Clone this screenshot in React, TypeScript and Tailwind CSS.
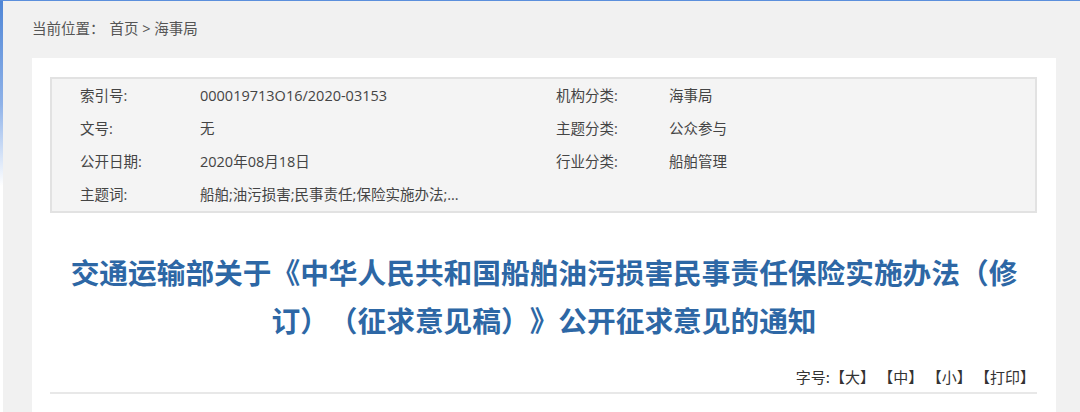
import React from "react";

const cjk = { fontFamily: '"Noto Sans CJK SC", "Noto Sans", sans-serif' };
const mixed = { fontFamily: '"Open Sans", "Noto Sans CJK SC", sans-serif' };

function Row({ l1, v1, l2, v2 }: { l1: string; v1: string; l2?: string; v2?: string }) {
  return (
    <div className="flex h-[33px] items-center text-[14.5px] text-[#444]" style={mixed}>
      <div className="flex w-[504px] pl-[28px]">
        <div className="w-[120px]">{l1}</div>
        <div>{v1}</div>
      </div>
      {l2 && (
        <div className="flex">
          <div className="w-[113px]">{l2}</div>
          <div>{v2}</div>
        </div>
      )}
    </div>
  );
}

export default function App() {
  return (
    <div
      className="flex h-[412px] w-[1080px] overflow-hidden border-t border-[#5b8fdc] bg-[#f1f1f1] [text-spacing-trim:space-all]"
      style={cjk}
    >
      <div className="h-full w-[3px] shrink-0 bg-gradient-to-b from-[#4f86d6] via-[#8fb2e8] via-25% to-white to-45%" />
      <div className="flex flex-col pl-[29px]">
        <div className="flex h-[57px] items-center pb-[2px] text-[14.5px] text-[#555]" style={mixed}>
          <span>当前位置：</span>
          <span className="ml-[5px]">首页 &gt; 海事局</span>
        </div>
        <div className="flex w-[1024px] grow flex-col bg-white px-[18px] pt-[19px]">
          <div className="w-[987px] border-2 border-[#e2e2e2] bg-[#f4f4f4]">
            <Row l1="索引号:" v1="000019713O16/2020-03153" l2="机构分类:" v2="海事局" />
            <Row l1="文号:" v1="无" l2="主题分类:" v2="公众参与" />
            <Row l1="公开日期:" v1="2020年08月18日" l2="行业分类:" v2="船舶管理" />
            <Row l1="主题词:" v1="船舶;油污损害;民事责任;保险实施办法;..." />
          </div>
          <h1 className="mt-[35px] text-center text-[28.7px] font-bold leading-[48px] text-[#2d67a5]">
            交通运输部关于《中华人民共和国船舶油污损害民事责任保险实施办法（修订）（征求意见稿）》公开征求意见的通知
          </h1>
          <div className="mt-[23px] flex w-[987px] justify-end border-b-2 border-[#e8e8e8] pb-[5px] pr-[2px] text-[15px] leading-[20px] text-[#333]">
            <span className="whitespace-pre">字号:【大】 【中】 【小】 【打印】</span>
          </div>
        </div>
      </div>
    </div>
  );
}
